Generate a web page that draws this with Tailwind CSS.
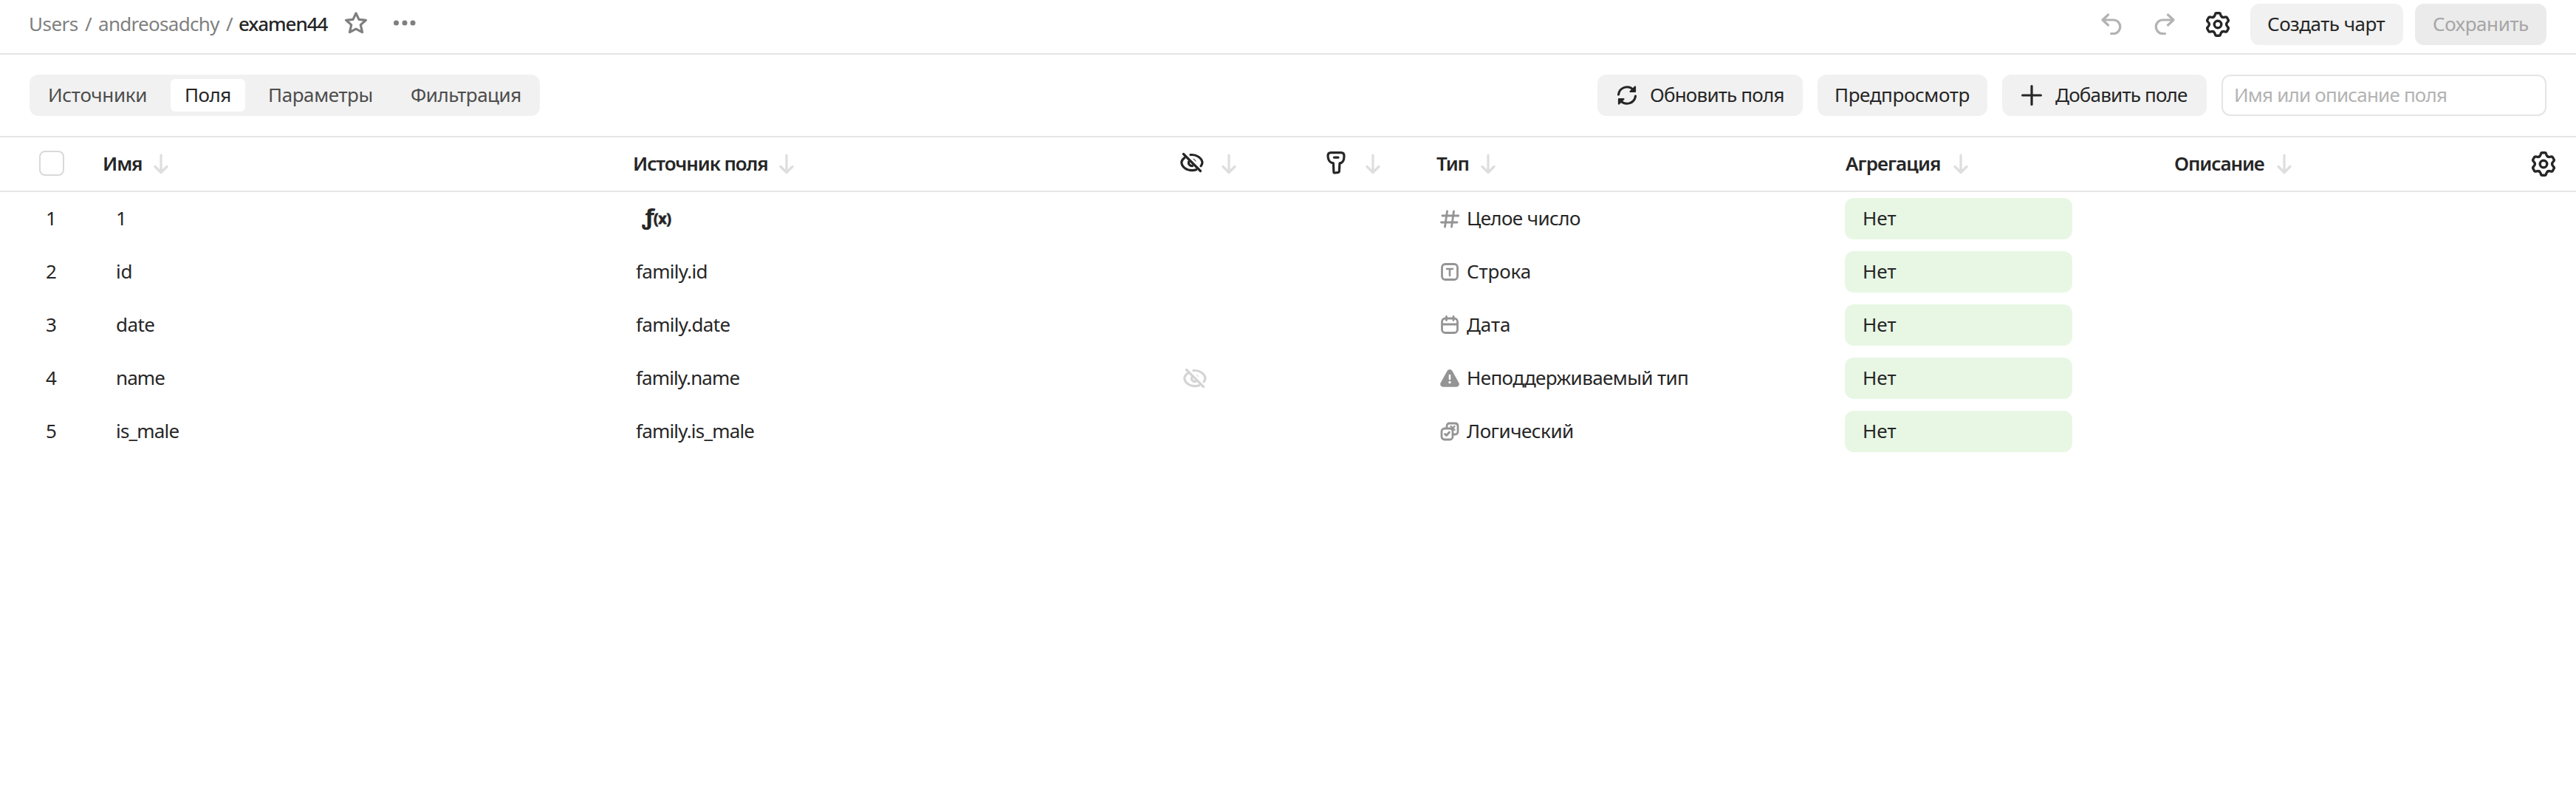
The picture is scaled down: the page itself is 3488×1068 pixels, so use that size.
<!DOCTYPE html>
<html lang="ru">
<head>
<meta charset="utf-8">
<title>examen44</title>
<script src="https://cdn.jsdelivr.net/npm/@tailwindcss/browser@4"></script>
</head>
<body class="bg-white text-[#262626] font-['Noto_Sans',sans-serif] text-[26px] leading-9 whitespace-nowrap">
<svg width="0" height="0" class="absolute">
  <symbol id="down" viewBox="0 0 20 28"><path d="M10 2v23M2 17.5l8 8 8-8" fill="none" stroke="#dedede" stroke-width="3.2" stroke-linecap="round" stroke-linejoin="round"/></symbol>
  <symbol id="gear" viewBox="-17 -17 34 34">
    <g fill="none" stroke="currentColor" stroke-width="3.4" stroke-linecap="round">
      <path id="tooth" d="M-5.8-10.05C-4.5-10.8-4-12-3.7-13.2-3.4-14.8-2.9-15.3-1.9-15.3H1.9C2.9-15.3 3.4-14.8 3.7-13.2 4-12 4.5-10.8 5.8-10.05"/>
      <use href="#tooth" transform="rotate(60)"/><use href="#tooth" transform="rotate(120)"/><use href="#tooth" transform="rotate(180)"/><use href="#tooth" transform="rotate(240)"/><use href="#tooth" transform="rotate(300)"/>
      <circle r="4.8"/>
    </g>
  </symbol>
  <symbol id="undo" viewBox="0 0 28 30"><path d="M9.5 2 2 9l7.500 7M2 9h14.500a9 9 0 0 1 0 18.500H13.500" fill="none" stroke="currentColor" stroke-width="3.200" stroke-linecap="round" stroke-linejoin="round"/></symbol>
  <symbol id="eye" viewBox="0 0 32 28">
    <g fill="none" stroke="currentColor" stroke-width="3.2" stroke-linecap="round" stroke-linejoin="round">
      <path d="M4.500 2.500 27.500 25.500"/>
      <path d="M14 3.600C22 2.800 29.500 8 30 14c0 1.800-.800 3.300-2 4.800"/>
      <path d="M6 7.500C3.200 9.600 1.800 12 1.800 14 2.500 20.500 9 24.600 16 24.600c2 0 3.900-.300 5.700-.900"/>
      <path d="M11.500 13c-.700 3.500 1.800 5.800 5 5.600"/>
    </g>
    <path d="M17 8.500c2.500.500 4.300 2.300 4.800 4.800z" fill="currentColor" stroke="none"/>
  </symbol>
</svg>

<div id="page" class="flex h-screen flex-col">
  <header class="flex h-[74px] shrink-0 items-start border-b-2 border-[#e5e5e5] pt-[5px] pr-10 pl-[39px]">
    <nav class="flex h-14 items-center text-[#808080]">
      <span class="mb-[2px] w-[76px] tracking-[-0.5px]">Users</span>
      <span class="mb-[2px] w-[18px]">/</span>
      <span class="mb-[2px] w-[173px] tracking-[-0.7px]">andreosadchy</span>
      <span class="mb-[2px] w-[17px]">/</span>
      <span class="mb-[2px] w-[143px] font-medium tracking-[-1.1px] text-[#262626]">examen44</span>
      <svg class="mb-[5px] h-[30px] w-8" viewBox="0 0 32 30"><path d="M16 1.900 20 10.400 29.400 11.300 22.300 17.600 24.500 27.600 16 23.200 7.500 27.600 9.700 17.600 2.600 11.300 12 10.400Z" fill="none" stroke="#7f7f7f" stroke-width="3.200" stroke-linejoin="round"/></svg>
      <svg class="mb-[4px] ml-[34px] h-2 w-8" viewBox="0 0 32 8" fill="#7f7f7f"><circle cx="4.500" cy="4" r="3.500"/><circle cx="16" cy="4" r="3.500"/><circle cx="27" cy="4" r="3.500"/></svg>
    </nav>
    <div class="ml-auto flex h-14 items-center">
      <svg class="mb-px h-[30px] w-7 text-[#b3b3b3]"><use href="#undo"/></svg>
      <svg class="mb-px ml-[44px] h-[30px] w-7 -scale-x-100 text-[#b3b3b3]"><use href="#undo"/></svg>
      <svg class="ml-[41px] size-[34px]"><use href="#gear"/></svg>
      <button class="ml-[27px] h-14 w-[207px] rounded-xl bg-[#f1f1f1] pb-[2px] pl-[23px] text-left tracking-[-0.5px]">Создать чарт</button>
      <button class="ml-4 h-14 w-[178px] rounded-xl bg-[#ebebeb] pb-[2px] pl-[24px] text-left tracking-[-0.4px] text-[#a6a6a6]">Сохранить</button>
    </div>
  </header>

  <div class="flex h-[112px] shrink-0 items-center border-b-2 border-[#e5e5e5] px-10">
    <div class="flex h-14 w-[691px] items-center rounded-xl bg-[#f1f1f1] text-[#4d4d4d]">
      <span class="mb-[2px] w-[191px] pl-[25px] tracking-[-0.3px]">Источники</span>
      <span class="flex h-11 w-[101px] items-center rounded-md bg-white pb-[2px] pl-[19px] tracking-[-0.5px] text-[#262626]">Поля</span>
      <span class="mb-[2px] w-[191px] pl-[31px] tracking-[-0.4px]">Параметры</span>
      <span class="mb-[2px] pl-[33px] tracking-[-0.5px]">Фильтрация</span>
    </div>
    <div class="ml-auto flex">
      <button class="flex h-14 w-[278px] items-center rounded-xl bg-[#f1f1f1] pl-[26px]">
        <svg class="h-7 w-7" viewBox="0 0 28 28"><g fill="none" stroke="currentColor" stroke-width="3.100" stroke-linecap="round" stroke-linejoin="round"><path d="M2.500 13A11.600 11.600 0 0 1 22.500 6.500"/><path d="M25 2.500V9H18.500Z" fill="currentColor" stroke-width="2.200"/><path d="M25.500 15A11.600 11.600 0 0 1 5.500 21.500"/><path d="M3 25.500V19H9.500Z" fill="currentColor" stroke-width="2.200"/></g></svg>
        <span class="mb-[2px] ml-[17px] tracking-[-0.8px]">Обновить поля</span>
      </button>
      <button class="ml-5 h-14 w-[230px] rounded-xl bg-[#f1f1f1] pb-[2px] pl-[23px] text-left tracking-[-0.4px]">Предпросмотр</button>
      <button class="ml-5 flex h-14 w-[277px] items-center rounded-xl bg-[#f1f1f1] pl-[26px]">
        <svg class="size-7" viewBox="0 0 28 28"><path d="M14 1.600V26.400M1.600 14H26.400" stroke="currentColor" stroke-width="3.200" stroke-linecap="round"/></svg>
        <span class="mb-[2px] ml-[18px] tracking-[-0.8px]">Добавить поле</span>
      </button>
      <div class="ml-5 h-14 w-[440px] rounded-xl border-2 border-[#e5e5e5] pt-[7px] pl-[15px] tracking-[-0.8px] text-[#b3b3b3]">Имя или описание поля</div>
    </div>
  </div>

  <div class="grid h-[74px] shrink-0 grid-cols-[139px_717px_742px_195px_152px_553px_446px_1fr] items-center border-b-2 border-[#e5e5e5] font-semibold">
    <div class="pl-[53px]"><div class="mb-[2px] size-[34px] rounded-lg border-2 border-[#d9d9d9]"></div></div>
    <div class="flex items-center"><span class="mb-[2px] w-[69px] tracking-[-1.1px]">Имя</span><svg class="h-7 w-5"><use href="#down"/></svg></div>
    <div class="flex items-center"><span class="mb-[2px] w-[199px] pl-px tracking-[-1.1px]">Источник поля</span><svg class="h-7 w-5"><use href="#down"/></svg></div>
    <div class="flex items-center"><svg class="mb-1 h-7 w-8"><use href="#eye"/></svg><svg class="ml-6 h-7 w-5"><use href="#down"/></svg></div>
    <div class="flex items-center pl-[3px]"><svg class="mb-1 h-8 w-[26px]" viewBox="0 0 26 32"><path d="M6 2.600H20Q24 2.600 24 7C24 12 22.500 16.700 18 16.800L17.300 28.200Q17.200 29 16.300 29.300L11.500 30Q10 30 9.900 28.800L9.400 16.800C4.500 16.500 2 12 2 7Q2 2.600 6 2.600ZM10.500 9.200H16" fill="none" stroke="currentColor" stroke-width="3.200" stroke-linecap="round" stroke-linejoin="round"/></svg><svg class="ml-[27px] h-7 w-5"><use href="#down"/></svg></div>
    <div class="flex items-center"><span class="mb-[2px] w-[60px] tracking-[-1.2px]">Тип</span><svg class="h-7 w-5"><use href="#down"/></svg></div>
    <div class="flex items-center"><span class="mb-[2px] w-[147px] pl-px tracking-[-0.9px]">Агрегация</span><svg class="h-7 w-5"><use href="#down"/></svg></div>
    <div class="flex items-center pr-[27px]"><span class="mb-[2px] w-[139px] tracking-[-1.1px]">Описание</span><svg class="h-7 w-5"><use href="#down"/></svg><svg class="ml-auto size-[34px]"><use href="#gear"/></svg></div>
  </div>
</div>
<script>
const icon = {
  hash: '<path d="M9.500 3 6.500 24M18.500 3l-3 21M3 9h22M1.500 18H23"/>',
  text: '<rect x="2.500" y="2.500" width="21" height="21" rx="4.500"/><path d="M9 9h8M13 9v9" stroke-width="2.600"/>',
  date: '<rect x="2.500" y="4" width="21" height="19.500" rx="4.500"/><path d="M3 12h20M8.500 1.500v5M18 1.500v5"/>',
  warn: '<path d="M11 3.400a2.400 2.400 0 0 1 4 0L24.300 20.200Q24.800 23.300 22 23.300H4Q1.200 23.300 1.700 20.200Z" fill="currentColor"/><path d="M13 9v5" stroke="#fff" stroke-width="2.600"/><circle cx="13" cy="18.600" r="1" stroke="#fff" fill="#fff" stroke-width="1.500"/>',
  bool: '<rect x="2" y="9" width="15" height="15" rx="4"/><path d="M6.500 16.500l2 2L12.500 14M9 8V6q0-4 4-4h7q4 0 4 4v7q0 4-4 4h-2.500"/><path d="M14.500 6 19.500 11M19.500 6l-2.500 3" stroke-width="2.400"/>'
};
const rows = [
  ['1', '', 'hash', 'Целое число', 'tracking-[-0.6px]', 'tracking-normal', ''],
  ['id', 'family.id', 'text', 'Строка', 'tracking-[-0.1px]', 'tracking-[-0.3px]', 'tracking-[-0.7px]'],
  ['date', 'family.date', 'date', 'Дата', 'tracking-[-0.1px]', 'tracking-[-0.6px]', 'tracking-[-0.7px]'],
  ['name', 'family.name', 'warn', 'Неподдерживаемый тип', 'tracking-[-0.6px]', 'tracking-[-0.9px]', 'tracking-[-0.9px]'],
  ['is_male', 'family.is_male', 'bool', 'Логический', 'tracking-[-0.5px]', 'tracking-[-0.8px]', 'tracking-[-0.8px]']
];
const formula = '<svg class="ml-[7px] block h-10 w-11" viewBox="0 0 44 40" fill="currentColor" font-family="Noto Sans" font-weight="bold"><text x="1" y="29" font-size="28" textLength="17" lengthAdjust="spacingAndGlyphs">ƒ</text><text x="17" y="28" font-size="20" textLength="24" lengthAdjust="spacingAndGlyphs" stroke="currentColor" stroke-width=".8">(x)</text></svg>';
const page = document.getElementById('page');
rows.forEach(([name, src, ic, type, tt, nt, st], i) => {
  page.insertAdjacentHTML('beforeend', `<div class="grid h-[72px] shrink-0 grid-cols-[62px_95px_703px_742px_346px_38px_512px_308px] items-center">
    <span class="col-start-2 mb-[2px]">${i + 1}</span>
    <span class="mb-[2px] ${nt}">${name}</span>
    <span class="mb-[2px] pl-px ${st}">${src || formula}</span>
    <span>${ic === 'warn' ? '<svg class="h-7 w-8 text-[#d4d4d4]"><use href="#eye"/></svg>' : ''}</span>
    <svg class="mb-px ml-[2px] size-[26px] text-[#949494]" viewBox="0 0 26 26" fill="none" stroke="currentColor" stroke-width="2.800" stroke-linecap="round" stroke-linejoin="round">${icon[ic]}</svg>
    <span class="mb-[2px] ${tt}">${type}</span>
    <div class="flex h-14 items-center rounded-xl bg-[#e8f7e4] pb-[2px] pl-[24px]">Нет</div>
  </div>`);
});
</script>
</body>
</html>
